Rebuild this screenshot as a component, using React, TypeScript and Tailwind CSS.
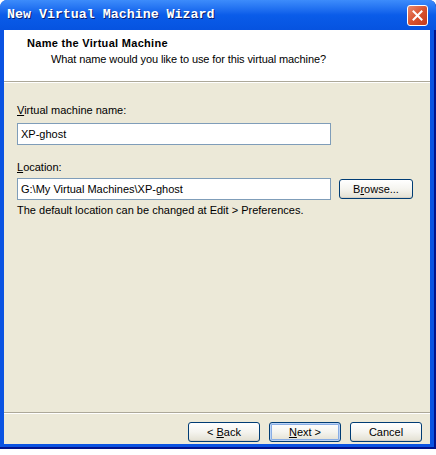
import React from 'react';

const ui = { fontFamily: 'Tahoma, "Liberation Sans", Arial, sans-serif' };

const XpButton: React.FC<{ children: React.ReactNode; isDefault?: boolean; className?: string }> = ({ children, isDefault, className = '' }) => (
  <button
    className={`h-[20px] rounded-[3px] border border-[#003c74] bg-gradient-to-b from-white via-[#f5f4ef] to-[#e3e0d2] text-[11px] leading-none text-black ${isDefault ? 'shadow-[inset_0_0_0_1px_#bcd4f6,inset_0_0_0_2px_#89ade4]' : 'shadow-[inset_0_-1px_0_#d6d0c5]'} ${className}`}
    style={ui}
  >
    {children}
  </button>
);

const CloseIcon = () => (
  <div className="flex h-[21px] w-[21px] items-center justify-center rounded-[3px] border border-white bg-gradient-to-br from-[#e8886c] via-[#d9532f] to-[#c2391a]">
    <svg width="11" height="11" viewBox="0 0 11 11">
      <path d="M1.5 1.5 L9.5 9.5 M9.5 1.5 L1.5 9.5" stroke="white" strokeWidth="2" strokeLinecap="square" />
    </svg>
  </div>
);

export default function App() {
  return (
    <div className="h-[455px] w-[436px] bg-white">
      <div className="flex h-[449px] w-[436px] flex-col rounded-t-[7px] bg-[#0a53e2] shadow-[inset_-2px_-2px_0_#00138c]">
        {/* title bar */}
        <div className="flex h-[30px] shrink-0 items-center justify-between rounded-t-[7px] bg-gradient-to-b from-[#3d8cfb] via-[#0a5ce9] to-[#0653e0] pl-[7px] pr-[8px]">
          <span
            className="text-[13.3px] font-bold text-white [text-shadow:1px_1px_0_#0a1e6e]"
            style={{ fontFamily: '"Liberation Mono", "DejaVu Sans Mono", monospace' }}
          >
            New Virtual Machine Wizard
          </span>
          <CloseIcon />
        </div>

        {/* client area */}
        <div className="mb-[5px] ml-[4px] mr-[6px] flex flex-1 flex-col bg-[#ece9d8]" style={ui}>
          <div className="flex h-[51px] shrink-0 flex-col bg-white pl-[23px] pt-[6px]">
            <div className="text-[11px] font-bold leading-[14px] tracking-[0.3px] text-black">Name the Virtual Machine</div>
            <div className="pl-[24px] pt-[2px] text-[11px] leading-[14px] tracking-[-0.1px] text-black">
              What name would you like to use for this virtual machine?
            </div>
          </div>
          <div className="h-px bg-[#aca899]" />
          <div className="h-px bg-white" />

          <div className="flex flex-1 flex-col px-[13px] pt-[21px] text-[11px] leading-[13px] text-black">
            <div>
              <span className="underline">V</span>irtual machine name:
            </div>
            <div className="mt-[6px] flex h-[22px] w-[314px] items-center border border-[#7f9db9] bg-white px-[3px]">XP-ghost</div>

            <div className="mt-[16px]">
              <span className="underline">L</span>ocation:
            </div>
            <div className="mt-[4px] flex items-center gap-[8px]">
              <div className="flex h-[22px] w-[314px] items-center border border-[#7f9db9] bg-white px-[3px]">
                G:\My Virtual Machines\XP-ghost
              </div>
              <XpButton className="w-[74px]">
                B<span className="underline">r</span>owse...
              </XpButton>
            </div>
            <div className="mt-[4px]">The default location can be changed at Edit &gt; Preferences.</div>
          </div>

          <div className="h-px bg-[#aca899]" />
          <div className="h-px bg-white" />
          <div className="flex h-[30px] shrink-0 items-start justify-end gap-[9px] pr-[8px] pt-[8px]">
            <XpButton className="w-[72px]">
              &lt; <span className="underline">B</span>ack
            </XpButton>
            <XpButton className="w-[72px]" isDefault>
              <span className="underline">N</span>ext &gt;
            </XpButton>
            <XpButton className="w-[72px]">Cancel</XpButton>
          </div>
        </div>
      </div>
    </div>
  );
}
